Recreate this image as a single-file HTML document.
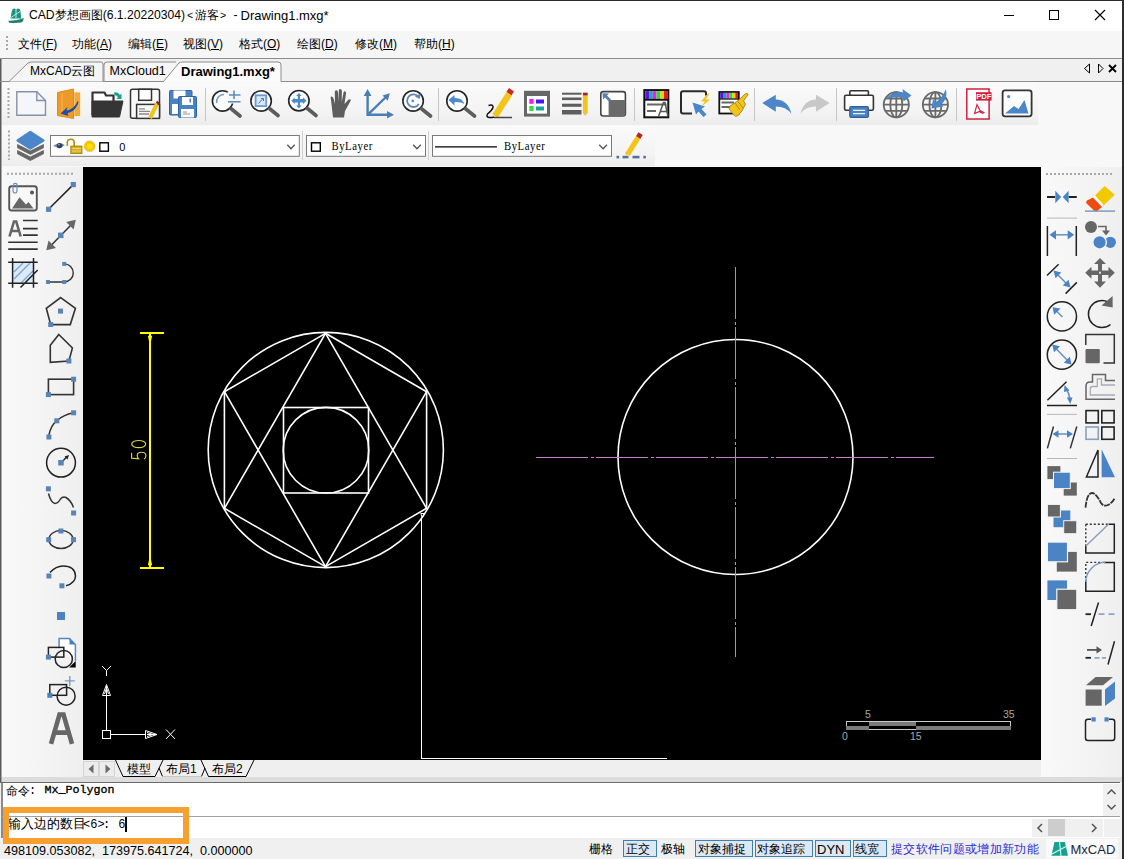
<!DOCTYPE html>
<html><head><meta charset="utf-8">
<style>
*{margin:0;padding:0;box-sizing:border-box}
html,body{width:1124px;height:859px;overflow:hidden}
body{position:relative;background:#f0f0f0;font-family:"Liberation Sans",sans-serif;font-size:12px;color:#000}
.a{position:absolute}
.t{position:absolute;white-space:pre;line-height:1}
svg{position:absolute;overflow:visible}
.mono{font-family:"Liberation Mono",monospace}
.ser{font-family:"Liberation Serif",serif}
</style></head><body>
<!-- window frame -->
<div class="a" style="left:0;top:0;width:1124px;height:1px;background:#2b2b2b"></div>
<!-- title bar -->
<div class="a" style="left:0;top:1px;width:1123px;height:30px;background:#fff"></div>
<svg style="left:4px;top:4px" width="24" height="24" viewBox="4 4 24 24">
  <path d="M10.5 18.5 L11.8 11 Q12.5 8.6 14.3 8.6 Q15.8 8.6 16 10.5 Q16.6 8.6 18.2 8.6 Q20 8.6 20.4 11 L21.3 18.5 Z" fill="#1f8f80"/>
  <path d="M11 17.5 L20 11.5 M16 10 V18" stroke="#a8f4e4" stroke-width="1"/>
  <path d="M8.2 20.8 Q16 21.2 23.8 18 Q23.6 21.5 21.5 22.6 Q15 23.4 9.2 22.8 Z" fill="#1f8070"/>
</svg>
<div class="t" id="title" style="left:29px;top:9px;font-size:12.15px;color:#000">CAD梦想画图(6.1.20220304)</div><div class="t" style="left:187px;top:10px;font-size:10.5px">&lt;</div><div class="t" style="left:194.5px;top:9px;font-size:12px">游客</div><div class="t" style="left:220px;top:10px;font-size:10.5px">&gt;</div><div class="t" style="left:233.5px;top:9px;font-size:12px">-</div><div class="t" style="left:240.5px;top:8.5px;font-size:13px">Drawing1.mxg*</div>
<div class="a" style="left:1004px;top:15px;width:10px;height:1px;background:#000"></div>
<div class="a" style="left:1049px;top:10px;width:10px;height:10px;border:1px solid #000"></div>
<svg style="left:1094px;top:9px" width="12" height="12" viewBox="0 0 12 12"><path d="M1 1 L11 11 M11 1 L1 11" stroke="#000" stroke-width="1.1"/></svg>


<!-- menu bar -->
<div class="a" id="menubar" style="left:0;top:31px;width:1123px;height:27px;background:#f6f6f6"></div>
<div class="a" style="left:6px;top:36px;width:2px;height:14px;background:repeating-linear-gradient(#a8a8a8 0 2px,transparent 2px 4px)"></div>
<div class="t" style="left:18px;top:38px">文件(<u>F</u>)</div>
<div class="t" style="left:72px;top:38px">功能(<u>A</u>)</div>
<div class="t" style="left:128px;top:38px">编辑(<u>E</u>)</div>
<div class="t" style="left:183px;top:38px">视图(<u>V</u>)</div>
<div class="t" style="left:239px;top:38px">格式(<u>O</u>)</div>
<div class="t" style="left:297px;top:38px">绘图(<u>D</u>)</div>
<div class="t" style="left:355px;top:38px">修改(<u>M</u>)</div>
<div class="t" style="left:414px;top:38px">帮助(<u>H</u>)</div>
<div class="a" style="left:0;top:58px;width:1123px;height:1px;background:#8c8c8c"></div>

<!-- tab bar -->
<div class="a" style="left:0;top:59px;width:1123px;height:22px;background:#f0f0f0"></div>
<div class="a" style="left:0;top:59px;width:1px;height:724px;background:#5a5a5a"></div><div class="a" style="left:1px;top:59px;width:1px;height:724px;background:#a8a8a8"></div>
<div class="a" style="left:0;top:81px;width:1123px;height:1px;background:#8c8c8c"></div>
<svg id="tabs" style="left:0;top:59px" width="300" height="24" viewBox="0 0 300 24">
  <path d="M9 22.5 L28 4 Q30 3 32 3 L101 3 Q103 3 103 5 L103 22.5" fill="#f5f5f5" stroke="#8c8c8c" stroke-width="1"/>
  <path d="M104 22.5 L104 6 Q104 3 107 3 L176 3 L176 22.5 Z" fill="#f5f5f5" stroke="none"/><path d="M104 22.5 L104 6 Q104 3 107 3 L176 3" fill="none" stroke="#8c8c8c" stroke-width="1"/>
  <path d="M171 22.5 L104.5 22.5" stroke="#8c8c8c" stroke-width="1"/><path d="M163 23.5 L179 4 Q180 3 183 3 L278 3 Q281 3 281 6 L281 23.5 Z" fill="#fbfbfb" stroke="none"/><path d="M163 23 L179 4 Q180 3 183 3 L278 3 Q281 3 281 6 L281 22.5" fill="none" stroke="#8c8c8c" stroke-width="1"/>
</svg>
<div class="t" style="left:30px;top:65px;font-size:12px">MxCAD云图</div>
<div class="t" style="left:109.5px;top:65px;font-size:12.5px">MxCloud1</div>
<div class="t" style="left:181px;top:65px;font-size:13px;font-weight:bold">Drawing1.mxg*</div>
<svg style="left:1083px;top:63px" width="36" height="12" viewBox="0 0 36 12">
  <path d="M6.5 1 L6.5 10 L1.5 5.5 Z" fill="none" stroke="#000" stroke-width="1"/>
  <path d="M15.5 1 L15.5 10 L20 5.5 Z" fill="none" stroke="#000" stroke-width="1"/>
  <path d="M26 2 L33 9 M33 2 L26 9" stroke="#000" stroke-width="1.8"/>
</svg>

<!-- toolbars area -->
<div class="a" id="tbarea" style="left:2px;top:82px;width:1121px;height:85px;background:#f8f8f8"></div>
<div class="a" id="tb1" style="left:2px;top:83px;width:1036px;height:42px;background:linear-gradient(#fafafa,#f3f3f3 70%,#ececec)"></div>
<div class="a" id="tb2" style="left:2px;top:126px;width:653px;height:40px;background:linear-gradient(#fafafa,#f3f3f3 70%,#ececec)"></div>

<!--TB1-->
<svg style="left:0;top:82px" width="1124" height="44" viewBox="0 82 1124 44">
 <!-- drag handle -->
 <path d="M8.5 88 V120" stroke="#a8a8a8" stroke-width="2" stroke-dasharray="2 2"/>
 <!-- 1 new -->
 <path d="M16.8 91.8 H36.8 L45.5 100.5 V115.2 H16.8 Z" fill="#f4f6fa" stroke="#8591aa" stroke-width="1.4"/>
 <path d="M36.8 91.8 V100.5 H45.5" fill="none" stroke="#8591aa" stroke-width="1.4"/>
 <!-- 2 open -->
 <path d="M74 92 H80.5 V116.5 H74 Z" fill="#f3a83a" stroke="#fff2dc" stroke-width="0.8"/>
 <path d="M57.5 92.5 L73.5 89 V118.5 L57.5 115.5 Z" fill="#ee9a28" stroke="#df8a1a" stroke-width="1"/>
 <path d="M62 93 V113" stroke="#f6b656" stroke-width="1"/>
 <path d="M77.5 101 C76 106 71 110 66.5 110.5 L67.5 107 L60.5 113.5 L68.5 116 L67.5 113 C73 112 77 108 78.5 102 Z" fill="#1f4fa2"/>
 <!-- 3 folder -->
 <path d="M92.5 115 V92.5 H104.5 L106 95.5 H113.5 V101" fill="#fff" stroke="#353535" stroke-width="2.2" stroke-linejoin="round"/>
 <path d="M92 101 H123 L119.5 117 H92 Z" fill="#353535" stroke="#353535" stroke-width="1" stroke-linejoin="round"/>
 <path d="M114 92.5 Q118 91.5 120 95 L121.5 93.5 L121.5 99 L116.5 99 L118 97.5 Q117 95 114.5 95 Z" fill="#1aa08c"/>
 <!-- 4 save edit -->
 <rect x="130.5" y="89.3" width="29" height="29" rx="2" fill="#fafafa" stroke="#333" stroke-width="1.5"/>
 <rect x="138.7" y="89.3" width="12.8" height="11" fill="#fff" stroke="#333" stroke-width="1.5"/>
 <rect x="136.6" y="104.4" width="22.9" height="14" fill="#f7f7f7" stroke="#333" stroke-width="1.5"/>
 <path d="M139 108.8 H145 M139 111.4 H150 M139 114 H149" stroke="#8a8a8a" stroke-width="1.3"/>
 <path d="M157 104 L150 118" stroke="#f2c419" stroke-width="4"/>
 <path d="M157.2 103.6 L158.6 101.8" stroke="#a02020" stroke-width="3.5"/>
 <!-- 5 save all -->
 <rect x="169.5" y="90.5" width="22.5" height="24.5" rx="1" fill="#4b82c3" stroke="#2f64a3" stroke-width="1"/>
 <rect x="173.5" y="90.5" width="12" height="8" fill="#fff"/>
 <rect x="172" y="104" width="6" height="10" fill="#fff"/>
 <rect x="178.5" y="96.5" width="18" height="21" rx="1" fill="#4b82c3" stroke="#2f64a3" stroke-width="1"/>
 <rect x="182" y="97" width="11" height="8" fill="#fff"/>
 <rect x="189.5" y="98.5" width="1.5" height="4" fill="#4b82c3"/>
 <rect x="181" y="109" width="13" height="8.5" fill="#fff"/>
 <path d="M183 112 H187 M183 114 H190" stroke="#777" stroke-width="0.8"/>
 <!-- separators -->
 <g stroke="#c6c6c6" stroke-width="1"><path d="M205.5 88 V121 M438.5 88 V121 M634.5 88 V121 M754.5 88 V121 M836.5 88 V121 M956.5 88 V121"/></g>
 <!-- magnifier bodies -->
 <g fill="#fbfdff" stroke="#262626" stroke-width="1.6">
  <circle cx="222.6" cy="100.9" r="10.2"/>
  <circle cx="261.1" cy="100.9" r="10.2"/>
  <circle cx="298.9" cy="100.7" r="10.2"/>
  <circle cx="413.1" cy="100.9" r="10.2"/>
  <circle cx="457" cy="100.9" r="10.2"/>
 </g>
 <g stroke="#5c5c5c" stroke-width="3.6" stroke-linecap="round">
  <path d="M231.5 109 L240 116 M270 109 L278 115.5 M307.5 108.5 L316 115.5 M421.8 109 L430.5 116 M465.8 109 L474.5 116"/>
 </g>
 <!-- 6 zoom +- -->
 <path d="M216.8 103 A7 7 0 0 1 224 94.5" fill="none" stroke="#6f9cc9" stroke-width="1.6"/>
 <rect x="227.5" y="91.5" width="13" height="12" fill="#f7f7f7"/>
 <path d="M234 90.5 V99 M229 95 H240.5 M228 101.8 H240.5" stroke="#5a8dc4" stroke-width="1.6"/>
 <!-- 7 zoom extents -->
 <rect x="255.6" y="95.3" width="10.6" height="10.8" fill="#d9e7f6" stroke="#6b9bd0" stroke-width="1.8"/>
 <path d="M258.5 103.5 L263.5 98 M261 98.5 H263.5 V101" fill="none" stroke="#4a7fb9" stroke-width="1"/>
 <!-- 8 zoom pan -->
 <path d="M298.9 93 L301.6 96 H300 V99 H303 V97.4 L306.5 100.7 L303 104 V102.4 H300 V105.4 H301.6 L298.9 108.5 L296.2 105.4 H297.8 V102.4 H294.8 V104 L291.3 100.7 L294.8 97.4 V99 H297.8 V96 H296.2 Z" fill="#4b8acd"/>
 <!-- 9 hand -->
 <path d="M333 117.5 L331 100 Q330 96 332 96.5 Q333.5 97 334 100 L335 104 L334.8 92 Q335 90 336.5 90.3 Q338 90.6 338 92.5 L338.5 102 L338.8 90.5 Q339.2 88.8 340.6 89.2 Q342 89.5 341.9 91 L341.7 102 L343.5 92.5 Q344 91 345.2 91.4 Q346.4 91.8 346 93.5 L344.5 104 L348 100 Q349.8 98.5 350.6 99.6 Q351.3 100.5 350 102 L345 111 L344 117.5 Z" fill="#5e5e5e"/>
 <!-- 10 axes -->
 <g stroke="#4a7fb5" stroke-width="2.4" fill="none"><path d="M367.6 93 V114.8 H390 M367.6 114.8 L386.5 96.5"/></g>
 <g fill="#4a7fb5"><path d="M367.6 89 L371.5 96 H363.7 Z M394 114.8 L387 111 V118.6 Z M389.8 93.3 L382.5 95.5 L387.8 100.8 Z"/></g>
 <!-- 11 zoom realtime -->
 <path d="M418.2 96.6 A6.3 6.3 0 1 0 418.8 104" fill="none" stroke="#5b87b5" stroke-width="1.8"/>
 <path d="M420.5 93.5 L419.8 99 L415 96.5 Z" fill="#5b87b5"/>
 <circle cx="412.8" cy="100.9" r="1.3" fill="#5b87b5"/>
 <!-- 12 zoom previous -->
 <path d="M448.5 100 L454.5 95 V98 Q462 97.5 464.5 104 Q461 101.5 454.5 102 V105.5 Z" fill="#4b8acd"/>
 <!-- 13 pencil sign -->
 <path d="M495 116 L509.5 93.5" stroke="#f3c51a" stroke-width="6.5"/>
 <path d="M509 93.5 L511.5 89.8" stroke="#c8282d" stroke-width="6"/>
 <path d="M494 117.5 H512" stroke="#444" stroke-width="1.5"/>
 <path d="M488.5 105.5 Q493.5 104 493 107.5 Q492 110.5 487.5 114 Q486 117 489 117.5 Q492 117.7 494 117" fill="none" stroke="#111" stroke-width="1.5"/>
 <!-- 14 layer table -->
 <rect x="525.5" y="92.3" width="23" height="22.8" fill="#fff" stroke="#666" stroke-width="3"/>
 <rect x="525" y="91" width="24.5" height="5" fill="#666"/>
 <rect x="529.3" y="99" width="4.3" height="4.8" fill="#f01cf0"/>
 <rect x="536" y="99.5" width="8" height="4" fill="#4a14f0"/>
 <rect x="529.3" y="106" width="4.3" height="5" fill="#30e030"/>
 <rect x="536" y="106.5" width="8" height="4" fill="#12a8a0"/>
 <!-- 15 lines pencil -->
 <g fill="#5e5e5e"><rect x="562" y="92.7" width="19.5" height="2"/><rect x="562" y="97.5" width="19.5" height="2.6"/><rect x="562" y="103.7" width="19.5" height="3.1"/><rect x="562" y="110" width="19.5" height="4.5"/></g>
 <rect x="582.9" y="95" width="4.8" height="18" fill="#f3c51a"/>
 <path d="M582.9 113 L585.3 116 L587.7 113 Z" fill="#e8c060"/>
 <rect x="582.9" y="92.7" width="4.8" height="2.6" fill="#a82030"/>
 <!-- 16 block -->
 <rect x="600.8" y="91.6" width="24.6" height="24.4" rx="2.5" fill="#fff" stroke="#444" stroke-width="1.6"/>
 <path d="M608.6 99.9 H625.4 V113.5 Q625.4 116 623 116 H608.6 Z" fill="#6a6a6a"/>
 <path d="M602.5 93.2 L603 99.5 L605 97.5 L609 101.5 L611 99.5 L607 95.5 L609 93.5 Z" fill="#5580b0"/>
 <!-- 17 text style -->
 <rect x="644.3" y="90.1" width="24" height="27.2" fill="#fff" stroke="#111" stroke-width="2"/>
 <g>
  <rect x="645.3" y="91.1" width="4" height="8" fill="#5a10f0"/>
  <rect x="649.3" y="91.1" width="3.5" height="8" fill="#1aa8a8"/>
  <rect x="652.8" y="91.1" width="3.7" height="8" fill="#f01cf0"/>
  <rect x="656.5" y="91.1" width="4" height="8" fill="#28e028"/>
  <rect x="660.5" y="91.1" width="3.5" height="8" fill="#f6cc10"/>
  <rect x="664" y="91.1" width="3.3" height="8" fill="#e02020"/>
 </g>
 <path d="M644.3 99.8 H668.3" stroke="#111" stroke-width="1.8"/>
 <path d="M647 104.5 H666.5 M647 111 H656" stroke="#666" stroke-width="2.2"/>
 <path d="M658.5 116.5 L663.5 102.5 H665 L668 116.5 M660.5 111.5 H666.5" fill="none" stroke="#555" stroke-width="1.5"/>
 <!-- 18 select -->
 <path d="M692 113.5 H683 Q681 113.5 681 111.5 V93.3 Q681 91.3 683 91.3 H704 Q706 91.3 706 93.3 V95.5" fill="none" stroke="#2a2a2a" stroke-width="2"/>
 <path d="M692.5 102.5 L705 106.5 L701.5 109 L706.5 114.5 L703.5 117 L698.5 111.5 L696 114.5 Z" fill="#4a86c8"/>
 <path d="M708 93.5 L701 101.5 H705 L700.5 107.5 L710 99.5 H706 L709.5 93.5 Z" fill="#f3c51a"/>
 <!-- 19 dim style hand -->
 <rect x="719.3" y="92" width="19.5" height="21.5" fill="#fff" stroke="#111" stroke-width="1.8"/>
 <g>
  <rect x="720.2" y="92.8" width="3.5" height="5.8" fill="#5a10f0"/>
  <rect x="723.7" y="92.8" width="2.8" height="5.8" fill="#1aa8a8"/>
  <rect x="726.5" y="92.8" width="3" height="5.8" fill="#f01cf0"/>
  <rect x="729.5" y="92.8" width="3" height="5.8" fill="#28e028"/>
  <rect x="732.5" y="92.8" width="2.8" height="5.8" fill="#f6cc10"/>
  <rect x="735.3" y="92.8" width="2.7" height="5.8" fill="#e02020"/>
 </g>
 <path d="M719.3 99 H738.8" stroke="#111" stroke-width="1.3"/>
 <path d="M721.5 102.5 H734 M721.5 107 H730" stroke="#666" stroke-width="1.8"/>
 <path d="M730 106 L737 101.5 L745 94 Q747.5 92.5 748.2 94.5 L743.5 101 L745.5 104 L742 111 L737.5 116 Q735 117 733.5 114.5 L729 109 Z" fill="#f3c51a" stroke="#9a7a10" stroke-width="0.8"/>
 <path d="M735 103 L740 110 M738 101.5 L743 108" stroke="#9a7a10" stroke-width="0.8"/>
 <!-- 20 undo -->
 <path d="M762.2 103 L775.8 94.7 V99.5 Q788 100 791.4 113.8 Q786 106.5 775.8 106.5 V111.7 Z" fill="#4a86c8"/>
 <!-- 21 redo -->
 <path d="M829.6 103 L816 94.7 V99.5 Q803.8 100 800.4 113.8 Q805.8 106.5 816 106.5 V111.7 Z" fill="#c8c8c8"/>
 <!-- 22 print -->
 <rect x="849.8" y="90.8" width="18.6" height="5" rx="1" fill="#fff" stroke="#333" stroke-width="1.6"/>
 <rect x="844.6" y="95.3" width="28.8" height="15" rx="1.5" fill="#fff" stroke="#333" stroke-width="1.6"/>
 <rect x="849.8" y="106.6" width="18.6" height="10.8" rx="1.5" fill="#4b82c3" stroke="#2f5e98" stroke-width="1.3"/>
 <path d="M853 110.3 H865 M853 113.6 H865" stroke="#e6f2ff" stroke-width="1.3"/>
 <!-- 23 globe1 -->
 <g fill="none" stroke="#6a6a6a" stroke-width="1.8">
  <circle cx="896.3" cy="104.7" r="12.6"/>
  <ellipse cx="896.3" cy="104.7" rx="6" ry="12.6"/>
  <path d="M896.3 92 V117.3 M884 104.7 H908.6 M885.5 98.5 H907 M885.5 110.9 H907"/>
 </g>
 <path d="M886 99 Q893 90.5 903 92.5 L902.5 89 L911.5 95.5 L903.5 101.5 L903 97.5 Q893 96 886 99 Z" fill="#4a86c8"/>
 <!-- 24 globe2 -->
 <g fill="none" stroke="#6a6a6a" stroke-width="1.8">
  <circle cx="935.4" cy="104.7" r="12.6"/>
  <ellipse cx="935.4" cy="104.7" rx="6" ry="12.6"/>
  <path d="M935.4 92 V117.3 M923 104.7 H947.8 M924.5 98.5 H946.3 M924.5 110.9 H946.3"/>
 </g>
 <path d="M946 89 Q948 100 941 104 L943.5 106.5 L931.5 108.5 L933 99.5 L936 102 Q942 98 946 89 Z" fill="#4a86c8"/>
 <!-- 25 pdf -->
 <rect x="966.8" y="89" width="22.3" height="30" fill="#fff" stroke="#d11f3e" stroke-width="1.5"/>
 <rect x="976" y="92.2" width="15.6" height="8.4" fill="#d11f3e"/>
 <text x="983.8" y="99.3" font-family="Liberation Sans" font-size="7.6" font-weight="bold" fill="#fff" text-anchor="middle">PDF</text>
 <path d="M974.5 113.5 L977 104.5 L980 110.5 Q983 112 984 112.5 Q982 114 979.5 111.5 Z" fill="none" stroke="#d11f3e" stroke-width="1.1"/>
 <!-- 26 image -->
 <rect x="1002.6" y="90.3" width="29" height="26" rx="2.5" fill="#fff" stroke="#333" stroke-width="1.8"/>
 <circle cx="1008.6" cy="96.6" r="1.6" fill="#4a86c8"/>
 <path d="M1005 113.5 L1014 106 L1018.5 109 L1024.5 100 L1028.5 113.5 Z" fill="#4a86c8"/>
</svg>

<!--/TB1-->
<!--TB2-->
<svg style="left:0;top:124px" width="700" height="44" viewBox="0 124 700 44">
 <path d="M9 130.5 V160" stroke="#a8a8a8" stroke-width="2" stroke-dasharray="2 2"/>
 <!-- layers icon -->
 <path d="M17.5 150.5 L30.3 157 L43.5 150.5 L43.5 153.8 L30.3 160.6 L17.5 153.8 Z" fill="#666" stroke="#666" stroke-width="0.8" stroke-linejoin="round"/>
 <path d="M17.5 144.5 L30.3 151 L43.5 144.5 L43.5 147.8 L30.3 154.4 L17.5 147.8 Z" fill="#666" stroke="#666" stroke-width="0.8" stroke-linejoin="round"/>
 <path d="M30.3 131.8 L43.5 140.5 L30.3 148.6 L17.5 140.5 Z" fill="#4a86c8" stroke="#4a86c8" stroke-width="2.2" stroke-linejoin="round"/>
 <!-- combos -->
 <g fill="#fff" stroke="#7a7a7a" stroke-width="1">
  <rect x="50.5" y="135.5" width="248.8" height="20.8"/>
  <rect x="306.5" y="135.5" width="119" height="20.8"/>
  <rect x="432.5" y="135.5" width="179" height="20.8"/>
 </g>
 <g stroke="#cfcfcf" stroke-width="1"><path d="M302.5 131 V160 M428.5 131 V160"/></g>
 <g fill="none" stroke="#555" stroke-width="1.3"><path d="M287.3 144.8 L291 148.8 L294.7 144.8 M413.2 144.8 L417 148.8 L420.8 144.8 M599.2 144.8 L603.1 148.8 L607 144.8"/></g>
 <!-- eye -->
 <path d="M53.2 145.8 Q59 141.2 65 145 Q59 150 53.2 145.8 Z" fill="#8090aa"/>
 <ellipse cx="59.6" cy="145.6" rx="2.8" ry="2.6" fill="#2c3e6a"/>
 <circle cx="59" cy="144.8" r="0.7" fill="#dde"/>
 <!-- lock -->
 <path d="M67.3 146 V142.5 Q67.3 139.3 70.8 139.3 Q74.2 139.3 74.2 142.5 V146.5" fill="none" stroke="#b08a10" stroke-width="1.6"/>
 <rect x="70.8" y="146" width="11.2" height="7.6" fill="#d4aa20" stroke="#a07a00" stroke-width="0.8"/>
 <path d="M72 148.5 H81 M72 151 H81" stroke="#f6e080" stroke-width="0.9"/>
 <!-- sun -->
 <circle cx="89.6" cy="146.2" r="5.4" fill="#f4c400" stroke="#f0a800" stroke-width="0.8" stroke-dasharray="1.2 0.8"/>
 <circle cx="89.6" cy="146.2" r="3" fill="#ffe000"/>
 <!-- squares -->
 <rect x="99.8" y="142.8" width="8.6" height="8.4" fill="#fff" stroke="#000" stroke-width="1.4"/>
 <rect x="311.5" y="142.8" width="8.8" height="8.4" fill="#fff" stroke="#000" stroke-width="1.4"/>
 <text x="119.3" y="150.6" font-family="Liberation Sans" font-size="11" fill="#000">0</text>
 <text x="331.5" y="150" font-family="Liberation Serif" font-size="11.5" fill="#000" textLength="41.3" lengthAdjust="spacingAndGlyphs" letter-spacing="0.6">ByLayer</text>
 <path d="M435 146.8 H497" stroke="#000" stroke-width="1.3"/>
 <text x="504" y="150" font-family="Liberation Serif" font-size="11.5" fill="#000" textLength="41.3" lengthAdjust="spacingAndGlyphs" letter-spacing="0.6">ByLayer</text>
 <!-- pencil -->
 <path d="M627.5 154.5 L638.5 137" stroke="#f3c51a" stroke-width="5.2"/>
 <path d="M638.2 137.4 L640.6 133.6" stroke="#b8222a" stroke-width="5"/>
 <path d="M626 156 L627.7 154 L625.4 152.5 Z" fill="#e8c060"/>
 <g fill="#56709a"><rect x="616.5" y="155.8" width="2.6" height="2.6"/><rect x="622.5" y="155.8" width="6" height="2.6"/><rect x="632.5" y="155.8" width="7" height="2.6"/><rect x="643.3" y="155.8" width="2.6" height="2.6"/></g>
</svg>

<!--/TB2-->
<!-- canvas -->
<div class="a" id="canvas" style="left:83px;top:167px;width:958px;height:593px;background:#000"></div>
<svg style="left:83px;top:167px" width="958" height="593" viewBox="83 167 958 593">
 <g fill="none" stroke="#fff" stroke-width="1.6">
  <circle cx="325.8" cy="450" r="117.6"/>
  <path d="M325.5 333.3 L426.6 391.7 L426.6 508.3 L325.5 566.7 L224.4 508.3 L224.4 391.7 Z"/>
  <path d="M224.4 508.3 L325.5 333.3 L426.6 508.3"/>
  <path d="M224.4 391.7 L325.5 566.7 L426.6 391.7"/>
  <rect x="283.5" y="407.5" width="85" height="85.5"/>
  <circle cx="326" cy="450.2" r="42.8"/>
  <circle cx="735.5" cy="457" r="117.5"/>
 </g>
 <g fill="none" stroke="#fff" stroke-width="1" shape-rendering="crispEdges">
  <path d="M421.5 518 L421.5 758.5 L667 758.5"/>
 </g>
 <path d="M420.8 513.5 L424.3 513.5 L422.3 518 Z" fill="none" stroke="#fff" stroke-width="1"/>
 <g stroke="#c87ec8" stroke-width="1" shape-rendering="crispEdges" fill="none">
  <path d="M536 457.5 L934 457.5" stroke-dasharray="52 3 3 2"/>
  <path d="M735.5 266.5 L735.5 657" stroke-dasharray="52 3 3 2"/>
 </g>
 <g stroke="#ffff00" stroke-width="2" shape-rendering="crispEdges" fill="none">
  <path d="M140 333 L164 333 M150 333 L150 568 M140 568 L164 568"/>
 </g>
 <path d="M148.5 336 L150 344 L151.5 336 Z M148.5 565 L150 557 L151.5 565 Z" fill="#ffff00" stroke="#ffff00" stroke-width="1"/>
 <g transform="translate(146 459.3) rotate(-90)" fill="none" stroke="#d8d048" stroke-width="1.15"><path d="M6.6 -14.4 H1.2 L0.6 -7.6 Q2 -8.8 3.8 -8.8 Q7 -8.8 7 -4.4 Q7 -0.1 3.6 -0.1 Q1.3 -0.1 0.4 -2"/><ellipse cx="15.2" cy="-7.3" rx="3.6" ry="7"/></g>
 <!-- UCS icon -->
 <g fill="none" stroke="#fff" stroke-width="1" shape-rendering="crispEdges">
  <rect x="102.5" y="730.5" width="8" height="8"/>
  <path d="M106.5 730 L106.5 696 M111 734.5 L145 734.5"/>
 </g>
 <g fill="none" stroke="#fff" stroke-width="1">
  <path d="M102.5 695.5 L110.5 695.5 L106.5 684.5 Z M106.5 686 L106.5 695 M104.5 694 L106.5 688 L108.5 694"/>
  <path d="M145.5 730.5 L145.5 738.5 L157 734.5 Z M147 734.5 L156 734.5 M147 732.5 L153 734.5 L147 736.5"/>
  <path d="M102 666 L106.5 670.5 L111 666 M106.5 670.5 L106.5 676"/>
  <path d="M166 729.5 L175 739 M175 729.5 L166 739"/>
 </g>
 <!-- scale bar -->
 <g shape-rendering="crispEdges">
  <rect x="846.5" y="721.5" width="164" height="8" fill="none" stroke="#c8c8c8" stroke-width="1"/>
  <rect x="869" y="722" width="47" height="3.5" fill="#7a7a7a"/>
  <rect x="846" y="725.5" width="23" height="4.5" fill="#7a7a7a"/>
  <rect x="916" y="725.5" width="95" height="4.5" fill="#7a7a7a"/>
  <path d="M847 725.5 L1010 725.5" stroke="#fff" stroke-width="0" />
 </g>
 <g font-family="Liberation Sans" font-size="10.5" fill="#a8a8a8">
  <text x="865" y="718">5</text>
  <text x="1003" y="718">35</text>
  <text x="842" y="740">0</text>
  <text x="910" y="740">15</text>
 </g>
</svg>

<!-- left toolbar -->
<div class="a" style="left:2px;top:167px;width:81px;height:593px;background:linear-gradient(90deg,#f9f9f9,#efefef)"></div>
<!-- right toolbar -->
<div class="a" style="left:1041px;top:167px;width:82px;height:593px;background:linear-gradient(90deg,#f9f9f9,#efefef)"></div>

<!--LT-->
<svg style="left:0;top:167px" width="84" height="612" viewBox="0 167 84 612">
 <path d="M7 173.8 H74" stroke="#a8a8a8" stroke-width="2" stroke-dasharray="2 2"/>
 <!-- image -->
 <rect x="9.2" y="186.2" width="27.6" height="24.3" rx="2.5" fill="#f8f8f8" stroke="#555" stroke-width="1.9"/>
 <path d="M12 208.5 L19.5 197.2 L26 204.5 L28.5 202 L33.5 208.5 Z" fill="#666"/>
 <circle cx="32" cy="192.4" r="2" fill="#555"/>
 <path d="M13 185 V190.5 Q13 193 15 193 Q17 193 17 190.5 V185 Q17 183.3 15 183.3 Q13.5 183.3 13.5 185" fill="none" stroke="#6a90c0" stroke-width="1.2"/>
 <!-- line -->
 <path d="M48.5 209.3 L73.3 184.6" stroke="#222" stroke-width="1.5"/>
 <g fill="#5a84b6"><rect x="46" y="206.7" width="5.2" height="5.2"/><rect x="70.7" y="182" width="5.2" height="5.2"/></g>
 <!-- text -->
 <path d="M9.5 236.5 L14 221.5 H16.2 L20.7 236.5 M11.3 231 H18.9" fill="none" stroke="#666" stroke-width="2.6"/>
 <path d="M23 220.5 H37.7 M23 228.6 H37.7 M23 235.1 H37.7 M8.2 242.3 H37.7 M8.2 249.1 H37.7" stroke="#333" stroke-width="1.6"/>
 <!-- dim aligned -->
 <path d="M50 246.5 L72.5 223.5" stroke="#333" stroke-width="1.5"/>
 <path d="M46.3 250.3 L48.5 240.5 L56 248 Z M75.8 219.7 L73.6 229.5 L66.2 222 Z" fill="#666"/>
 <rect x="58" y="232.6" width="5.5" height="5.5" fill="#5a84b6"/>
 <!-- hatch -->
 <rect x="12.6" y="262.2" width="20.9" height="21" fill="#dce9f6"/>
 <path d="M14 272 L23 263 M14 279 L30 263 M21 283 L33 271" stroke="#7ea4cc" stroke-width="1.3"/>
 <path d="M12.6 258 V287.8 M33.5 258 V287.8 M8.2 262.2 H37.7 M8.2 283.2 H37.7 M20.5 287.5 L37.7 270" stroke="#222" stroke-width="1.5"/>
 <!-- pline arc -->
 <path d="M48 282 H64.2 M64.2 263.9 A9 9 0 0 1 64.2 282" fill="none" stroke="#333" stroke-width="1.4"/>
 <g fill="#5a84b6"><rect x="46" y="280" width="4" height="4"/><rect x="62.2" y="280" width="4" height="4"/><rect x="62.2" y="261.9" width="4" height="4"/></g>
 <!-- pentagon -->
 <path d="M60.7 297.6 L75.4 308.3 L70.3 324.6 L50.7 324.6 L46.3 308.3 Z" fill="none" stroke="#333" stroke-width="1.6"/>
 <g fill="#5a84b6"><rect x="58" y="308.6" width="5" height="5"/><rect x="48.2" y="322" width="5" height="5"/></g>
 <!-- polygon -->
 <path d="M58.8 334.5 L72.4 348 L68.9 361 L50.3 362.4 L50.3 345.2 Z" fill="none" stroke="#333" stroke-width="1.6"/>
 <rect x="66.4" y="358.5" width="5" height="5" fill="#5a84b6"/>
 <!-- rect -->
 <rect x="48.4" y="379.2" width="25.2" height="15.4" fill="none" stroke="#333" stroke-width="1.6"/>
 <g fill="#5a84b6"><rect x="45.9" y="392.1" width="5" height="5"/><rect x="71.1" y="376.7" width="5" height="5"/></g>
 <!-- arc -->
 <path d="M48.9 435 Q51 425 56.8 420.8 Q63 415 73.6 412.8" fill="none" stroke="#333" stroke-width="1.5"/>
 <g fill="#5a84b6"><rect x="46.4" y="434.5" width="5" height="5"/><rect x="54.3" y="418.3" width="5" height="5"/><rect x="71.1" y="410.3" width="5" height="5"/></g>
 <!-- circle -->
 <circle cx="61" cy="462.7" r="14.4" fill="none" stroke="#222" stroke-width="1.5"/>
 <path d="M61 462.7 L67 456.8" stroke="#222" stroke-width="1.4"/>
 <path d="M69 455 L64.5 456.5 L67.5 459.5 Z" fill="#222"/>
 <rect x="58.2" y="460" width="5.5" height="5.5" fill="#5a84b6"/>
 <!-- spline -->
 <path d="M48.5 493.5 Q51 503 55 503.5 Q58 503.5 60.5 499 Q63 496 66 497.5 Q71 500.5 73.5 507.5" fill="none" stroke="#333" stroke-width="1.5"/>
 <g fill="#5a84b6"><rect x="45.9" y="486.3" width="5" height="5"/><rect x="71.1" y="510.5" width="5" height="5"/></g>
 <!-- ellipse -->
 <ellipse cx="61" cy="539.6" rx="12.2" ry="9" fill="none" stroke="#333" stroke-width="1.5"/>
 <g fill="#5a84b6"><rect x="58.4" y="528.5" width="5" height="5"/><rect x="46.2" y="537.2" width="5" height="5"/><rect x="71" y="537.2" width="5" height="5"/></g>
 <!-- ellipse arc -->
 <path d="M50 572.5 Q56 566 63 566 Q75 566 75.5 576 Q75.5 583 66 585.8" fill="none" stroke="#222" stroke-width="1.5"/>
 <g fill="#5a84b6"><rect x="46.4" y="573.5" width="5" height="5"/><rect x="59.4" y="583.3" width="5" height="5"/></g>
 <!-- point -->
 <rect x="57" y="612" width="8" height="8" fill="#4a82c0"/>
 <!-- insert with doc -->
 <path d="M59.1 647 V638.6 H69.5 L75.4 644.5 V661" fill="#fff" stroke="#5a88c0" stroke-width="1.5"/>
 <path d="M69.5 638.6 V644.5 H75.4 Z" fill="#4a82c0"/>
 <rect x="48.4" y="647.4" width="15.4" height="9.7" fill="none" stroke="#222" stroke-width="1.5"/>
 <circle cx="63.8" cy="659" r="8.6" fill="none" stroke="#222" stroke-width="1.5"/>
 <path d="M75.7 661 V667.5 H69.2 Z" fill="#000"/>
 <rect x="45.9" y="654.6" width="5" height="5" fill="#5a84b6"/>
 <!-- make block -->
 <path d="M69.8 676 V686 M64.8 680.9 H74.8" stroke="#7a9cc0" stroke-width="1.4"/>
 <rect x="49.8" y="684.6" width="16.8" height="10.7" fill="none" stroke="#222" stroke-width="1.5"/>
 <circle cx="66.1" cy="696.2" r="9" fill="none" stroke="#222" stroke-width="1.5"/>
 <rect x="47.3" y="692.8" width="5" height="5" fill="#4a82c0"/>
 <!-- A -->
 <path d="M51 743.8 L59.5 714.5 H63.5 L72 743.8 M54.5 732.6 H68.5" fill="none" stroke="#666" stroke-width="4.6"/>
</svg>

<!--/LT-->
<!--RT-->
<svg style="left:1041px;top:167px" width="82" height="612" viewBox="1041 167 82 612">
 <path d="M1046 173.9 H1112" stroke="#a8a8a8" stroke-width="2" stroke-dasharray="2 2"/>
 <!-- break -->
 <path d="M1047 197 H1055 M1068.5 197 H1076.8" stroke="#222" stroke-width="1.8"/>
 <path d="M1055.3 190.8 L1061.2 197 L1055.3 203.2 Z M1068.6 190.8 L1062.7 197 L1068.6 203.2 Z" fill="#4a84c4"/>
 <!-- eraser -->
 <path d="M1094.5 196 L1104.6 186 L1114.8 194.8 L1103 206 Z" fill="#f4c800"/>
 <path d="M1093 197.5 L1102 207 L1097 211 Q1095.5 211.5 1094 210.5 L1086.6 203.5 Q1085.5 202 1087 200.5 Z" fill="#f04a10"/>
 <path d="M1094.2 196.3 L1102.8 205.5" stroke="#fff" stroke-width="2"/>
 <path d="M1085 211.1 H1115" stroke="#6a90b8" stroke-width="1.3"/>
 <!-- separators -->
 <path d="M1047 218.1 H1077 M1047 414.4 H1077 M1047 458.5 H1077" stroke="#b8b8b8" stroke-width="1"/>
 <!-- dim linear -->
 <path d="M1047.4 226 V256 M1076.3 226 V256" stroke="#222" stroke-width="1.5"/>
 <path d="M1055 234.8 H1069" stroke="#6a90b8" stroke-width="1.5"/>
 <path d="M1049.5 234.8 L1056 230.2 V239.4 Z M1074.2 234.8 L1067.7 230.2 V239.4 Z" fill="#4a84c4"/>
 <!-- copy -->
 <circle cx="1091" cy="226.9" r="6" fill="#666"/>
 <path d="M1098 226.5 H1106 V231" fill="none" stroke="#666" stroke-width="1.6"/>
 <path d="M1102 230.5 L1110 230.5 L1106 235.5 Z" fill="#666"/>
 <circle cx="1110.3" cy="242.3" r="5.6" fill="#4a84c4"/>
 <circle cx="1099.6" cy="242.3" r="6.8" fill="#4a84c4" stroke="#f4f4f4" stroke-width="1.4"/>
 <!-- dim aligned -->
 <path d="M1047 275.5 L1058.6 264.3 M1065.6 293.6 L1076.8 282.4" stroke="#222" stroke-width="1.5"/>
 <path d="M1056 273 L1068 285" stroke="#6a90b8" stroke-width="1.5"/>
 <path d="M1053.5 270.5 L1055.5 278.3 L1061.3 272.5 Z M1070.5 287.5 L1068.5 279.7 L1062.7 285.5 Z" fill="#4a84c4"/>
 <!-- move -->
 <path d="M1100 258 L1106 264 H1102 V270.5 H1108.5 V266.7 L1114.8 272.7 L1108.5 278.7 V275 H1102 V281.5 H1106 L1100 287.8 L1094 281.5 H1098 V275 H1091.5 V278.7 L1085.2 272.7 L1091.5 266.7 V270.5 H1098 V264 H1094 Z" fill="#666"/>
 <rect x="1099" y="271.7" width="2" height="2" fill="#ddd"/>
 <!-- dim radius -->
 <circle cx="1061.9" cy="316.4" r="14.6" fill="none" stroke="#222" stroke-width="1.5"/>
 <path d="M1062.5 317 L1056 310.5" stroke="#6a90b8" stroke-width="1.5"/>
 <path d="M1052.6 307.2 L1060.5 308.5 L1054.2 314.8 Z" fill="#4a84c4"/>
 <!-- rotate -->
 <path d="M1108 302 A13.5 13.5 0 1 0 1110.5 324.5" fill="none" stroke="#222" stroke-width="1.5"/>
 <path d="M1112.6 296 L1112.7 307.5 L1101.5 305.5 Z" fill="#666"/>
 <!-- dim diameter -->
 <circle cx="1061.9" cy="354.7" r="14.6" fill="none" stroke="#222" stroke-width="1.5"/>
 <path d="M1055 347.5 L1069 362" stroke="#6a90b8" stroke-width="1.5"/>
 <path d="M1052.2 344.5 L1060 346.2 L1054 352.2 Z M1071.5 364.5 L1063.8 362.8 L1069.8 356.8 Z" fill="#4a84c4"/>
 <!-- scale -->
 <path d="M1085.8 345 V334.5 H1114.3 V363 H1103.5" fill="none" stroke="#333" stroke-width="1.5"/>
 <rect x="1085.5" y="349" width="14.3" height="14.3" rx="1" fill="#666"/>
 <!-- dim angular -->
 <path d="M1047.4 400.3 L1066.5 381.7 M1047 405.4 H1077" stroke="#222" stroke-width="1.5"/>
 <path d="M1066 388 Q1069.5 394 1070 400" fill="none" stroke="#6a90b8" stroke-width="1.5"/>
 <path d="M1064.5 385 L1069.5 390.5 L1064 392 Z M1070.3 404 L1066.8 397.5 L1072.5 397.5 Z" fill="#4a84c4"/>
 <!-- offset/stretch -->
 <path d="M1115 380.5 H1105.5 V374.5 H1092.5 V382 H1090 Q1086 382 1086 386 V399.2 H1115" fill="none" stroke="#666" stroke-width="1.5"/>
 <path d="M1115 385 H1101.5 V378.8 H1097.3 V386.5 H1092.5 Q1090.3 386.5 1090.3 389 V395 H1115" fill="none" stroke="#aab" stroke-width="1.3"/>
 <!-- dim oblique -->
 <path d="M1047.4 448.4 L1053.5 426.5 M1070.3 448.4 L1076.8 426.5" stroke="#333" stroke-width="1.5"/>
 <path d="M1057 434 H1068" stroke="#6a90b8" stroke-width="1.5"/>
 <path d="M1052.5 434 L1058.5 430.2 V437.8 Z M1073 434 L1067 430.2 V437.8 Z" fill="#4a84c4"/>
 <!-- array -->
 <g fill="none" stroke="#222" stroke-width="1.6"><rect x="1086" y="410.6" width="12.3" height="12.3"/><rect x="1101.8" y="410.6" width="12.3" height="12.3"/><rect x="1101.8" y="427" width="12.3" height="12.3"/></g>
 <rect x="1086" y="427" width="12.3" height="12.3" fill="none" stroke="#8aa0b8" stroke-width="1.6"/>
 <!-- mirror -->
 <path d="M1098 450 V477 H1086.4 Z" fill="none" stroke="#222" stroke-width="1.5"/>
 <path d="M1101.6 449.3 L1115 477.3 H1101.6 Z" fill="#4a84c4"/>
 <!-- draw order 1 -->
 <rect x="1047.4" y="466.1" width="13" height="13" fill="#666"/>
 <rect x="1063.7" y="482.5" width="13.1" height="13.1" fill="#666"/>
 <rect x="1053.5" y="472.2" width="16.8" height="16.4" fill="#4a84c4" stroke="#f4f4f4" stroke-width="1"/>
 <!-- spline dashed -->
 <path d="M1085.5 507.7 Q1087 493 1092 493 Q1096 493 1101 503 Q1104 507 1108 505 Q1112 503 1114.5 498.5" fill="none" stroke="#333" stroke-width="1.8" stroke-dasharray="6 1"/>
 <!-- draw order 2 -->
 <rect x="1053.5" y="510.5" width="16.8" height="16.7" fill="#4a84c4"/>
 <rect x="1047.4" y="504.4" width="13" height="12.6" fill="#666" stroke="#f4f4f4" stroke-width="1"/>
 <rect x="1063.7" y="520.7" width="13.1" height="13" fill="#666" stroke="#f4f4f4" stroke-width="1"/>
 <!-- chamfer -->
 <path d="M1085.8 524.3 H1108.5 M1085.8 524.3 V546" fill="none" stroke="#333" stroke-width="1.4" stroke-dasharray="2 2"/>
 <path d="M1108.5 524.3 H1114.3 V553 H1085.8 V546" fill="none" stroke="#222" stroke-width="1.5"/>
 <path d="M1085.8 546 L1108.5 524.3" stroke="#8aa0b8" stroke-width="1.5"/>
 <!-- draw order 3 -->
 <rect x="1056.8" y="551.9" width="20" height="19.7" fill="#666"/>
 <rect x="1047.4" y="542.1" width="20.1" height="19.7" fill="#4a84c4" stroke="#f4f4f4" stroke-width="1.2"/>
 <!-- fillet -->
 <path d="M1085.8 582 V562.4 H1104" fill="none" stroke="#333" stroke-width="1.4" stroke-dasharray="2 2"/>
 <path d="M1104 562.4 H1114.3 V591.3 H1085.8 V582" fill="none" stroke="#222" stroke-width="1.5"/>
 <path d="M1085.8 582 A19.6 19.6 0 0 1 1105.4 562.4" fill="none" stroke="#7a98b8" stroke-width="1.4"/>
 <!-- draw order 4 -->
 <rect x="1047.4" y="580.4" width="19.6" height="19.6" fill="#4a84c4"/>
 <rect x="1056.8" y="589.2" width="20" height="20.5" fill="#666" stroke="#f4f4f4" stroke-width="1.2"/>
 <!-- break at point -->
 <path d="M1085.5 614.2 H1091" stroke="#222" stroke-width="1.8"/>
 <path d="M1098.5 614.2 H1104.5 M1108.5 614.2 H1114.5" stroke="#8aa6c4" stroke-width="1.8"/>
 <path d="M1091.2 626 L1098.5 602.5" stroke="#222" stroke-width="1.5"/>
 <!-- join -->
 <path d="M1087 649.9 H1099" stroke="#555" stroke-width="1.8"/>
 <path d="M1102 649.9 L1096.5 646.3 V653.5 Z" fill="#555"/>
 <path d="M1085.5 657.8 H1091" stroke="#222" stroke-width="1.8"/>
 <path d="M1094.5 657.8 H1099.5 M1102 657.8 H1106" stroke="#8aa6c4" stroke-width="1.8"/>
 <path d="M1108 664.5 L1114.5 641.3" stroke="#222" stroke-width="1.5"/>
 <!-- box -->
 <path d="M1086 685.3 L1095.5 677 H1113 L1103 685.3 Z" fill="#666"/>
 <rect x="1085.6" y="689.5" width="16.1" height="16.2" fill="#666"/>
 <path d="M1105 689.5 L1115 681.5 V698.5 L1105 706 Z" fill="#4a84c4"/>
 <!-- bottom rect -->
 <path d="M1091 719.3 H1088 Q1085.5 719.3 1085.5 721.8 V738 Q1085.5 740.5 1088 740.5 H1112.2 Q1114.7 740.5 1114.7 738 V721.8 Q1114.7 719.3 1112.2 719.3 H1109" fill="none" stroke="#222" stroke-width="1.5"/>
 <g fill="#4a84c4"><rect x="1091.5" y="717.3" width="4.2" height="4.2"/><rect x="1104.5" y="717.3" width="4.2" height="4.2"/></g>
</svg>

<!--/RT-->
<!-- layout tabs -->
<div class="a" style="left:2px;top:760px;width:81px;height:17px;background:linear-gradient(90deg,#f9f9f9,#efefef)"></div>
<div class="a" style="left:83px;top:760px;width:958px;height:17px;background:#efefef"></div>
<div class="a" style="left:1041px;top:760px;width:82px;height:17px;background:linear-gradient(90deg,#f9f9f9,#efefef)"></div>
<div class="a" style="left:83px;top:761px;width:16px;height:16px;border:1px solid #d4d4d4;background:#ececec"></div>
<div class="a" style="left:99px;top:761px;width:16px;height:16px;border:1px solid #d4d4d4;background:#ececec"></div>
<svg style="left:83px;top:761px" width="34" height="16" viewBox="0 0 34 16">
 <path d="M10.5 3.5 L10.5 12.5 L5.5 8 Z" fill="#6b6b6b"/>
 <path d="M22.5 3.5 L22.5 12.5 L27.5 8 Z" fill="#6b6b6b"/>
</svg>
<svg style="left:83px;top:756px" width="180" height="24" viewBox="83 756 180 24">
 <path d="M115.5 760 L123 776.5 L155 776.5 L163 760 M159 768 L162.5 776.5 M201 760 L208.5 776.5 M201.5 776.5 L205 768 M208.5 776.5 L246 776.5 L254 760" fill="none" stroke="#000" stroke-width="1"/>
 <path d="M162.5 776.5 L201.5 776.5" stroke="#c8c8c8" stroke-width="1"/>
</svg>
<div class="t" style="left:127px;top:763px;font-size:12px">模型</div>
<div class="t" style="left:166px;top:763px;font-size:12px">布局1</div>
<div class="t" style="left:212px;top:763px;font-size:12px">布局2</div>
<div class="a" style="left:2px;top:777px;width:1121px;height:5px;background:#dcdcdc"></div>
<div class="a" style="left:0;top:782px;width:1120px;height:1px;background:#6a6a6a"></div>

<!-- command area -->
<div class="a" style="left:2px;top:783px;width:1118px;height:55px;background:#fff"></div>
<div class="a" style="left:1px;top:783px;width:2px;height:55px;background:#8a8a8a"></div>
<div class="a" style="left:1103px;top:784px;width:17px;height:32px;background:#f0f0f0"></div>
<svg style="left:1103px;top:784px" width="17" height="32" viewBox="0 0 17 32">
 <path d="M4.5 10 L8.5 6 L12.5 10 M4.5 21 L8.5 25 L12.5 21" fill="none" stroke="#555" stroke-width="1.5"/>
</svg>
<div class="a" style="left:2px;top:816px;width:1118px;height:1px;background:#a0a0a0"></div>
<div class="a" style="left:1032px;top:819px;width:71px;height:18px;background:#f0f0f0"></div>
<div class="a" style="left:1048px;top:819px;width:17px;height:17px;background:#cdcdcd"></div>
<div class="a" style="left:1104px;top:819px;width:16px;height:18px;background:#f0f0f0"></div>
<svg style="left:1032px;top:819px" width="71" height="18" viewBox="0 0 71 18">
 <path d="M10 5 L6 9 L10 13 M60 5 L64 9 L60 13" fill="none" stroke="#555" stroke-width="1.5"/>
</svg>
<div class="t" style="left:5.5px;top:784.5px;font-size:12px">命令</div><div class="t mono" style="left:29px;top:785px;font-size:12px">:</div><div class="t mono" style="left:44.5px;top:785px;font-size:11.7px;-webkit-text-stroke:0.35px #000">Mx_Polygon</div>
<div class="t" style="left:7.5px;top:817.5px;font-size:12.5px">输入边的数目</div><div class="t mono" style="left:83px;top:818.5px;font-size:12px">&lt;6&gt;</div><div class="t mono" style="left:103px;top:818.5px;font-size:12px">:</div><div class="t mono" style="left:118.3px;top:818.5px;font-size:12px">6</div>
<div class="a" style="left:125px;top:817px;width:2px;height:15px;background:#000"></div>

<!-- status bar -->
<div class="a" style="left:0;top:838px;width:1123px;height:21px;background:#f0f0f0"></div>
<div class="a" style="left:2.5px;top:807px;width:186px;height:37px;border:6px solid #f7a030"></div>
<div class="t" style="left:4px;top:845px;font-size:12.6px">498109.053082,  173975.641724,  0.000000</div>
<div class="t" style="left:589px;top:843px;font-size:12px">栅格</div>
<div class="a" style="left:623px;top:840px;width:34px;height:17px;border:1px solid #3c7fb1;background:#dce8f4"></div>
<div class="t" style="left:626px;top:843px;font-size:12px">正交</div>
<div class="t" style="left:661px;top:843px;font-size:12px">极轴</div>
<div class="a" style="left:695px;top:840px;width:58px;height:17px;border:1px solid #3c7fb1;background:#dce8f4"></div>
<div class="t" style="left:698px;top:843px;font-size:12px">对象捕捉</div>
<div class="a" style="left:755px;top:840px;width:58px;height:17px;border:1px solid #3c7fb1;background:#dce8f4"></div>
<div class="t" style="left:757px;top:843px;font-size:12px">对象追踪</div>
<div class="a" style="left:815px;top:840px;width:36px;height:17px;border:1px solid #3c7fb1;background:#dce8f4"></div>
<div class="t" style="left:817px;top:843px;font-size:13px">DYN</div>
<div class="a" style="left:853px;top:840px;width:34px;height:17px;border:1px solid #3c7fb1;background:#dce8f4"></div>
<div class="t" style="left:855px;top:843px;font-size:12px">线宽</div>
<div class="t" style="left:891px;top:843px;font-size:12px;letter-spacing:0.35px;color:#2b2bd0">提交软件问题或增加新功能</div>
<div class="a" style="left:1046px;top:839px;width:72px;height:19px;background:#fafafa"></div>
<svg style="left:1050px;top:841px" width="20" height="16" viewBox="1050 841 20 16">
 <path d="M1051.4 855.7 L1054.5 842.1 H1064.9 L1068 855.7 Z" fill="#17a08e"/>
 <path d="M1051 854.5 L1066 846.5 M1059.5 842 L1061 856" stroke="#c8fff4" stroke-width="1.1"/>
</svg>
<div class="t" style="left:1070.5px;top:842.5px;font-size:13px;color:#1c2640">MxCAD</div>
<div class="a" style="left:1122px;top:0;width:2px;height:859px;background:#2e2e2e"></div>
<div class="a" style="left:0;top:0;width:1124px;height:1px;background:#2b2b2b"></div>
</body></html>
